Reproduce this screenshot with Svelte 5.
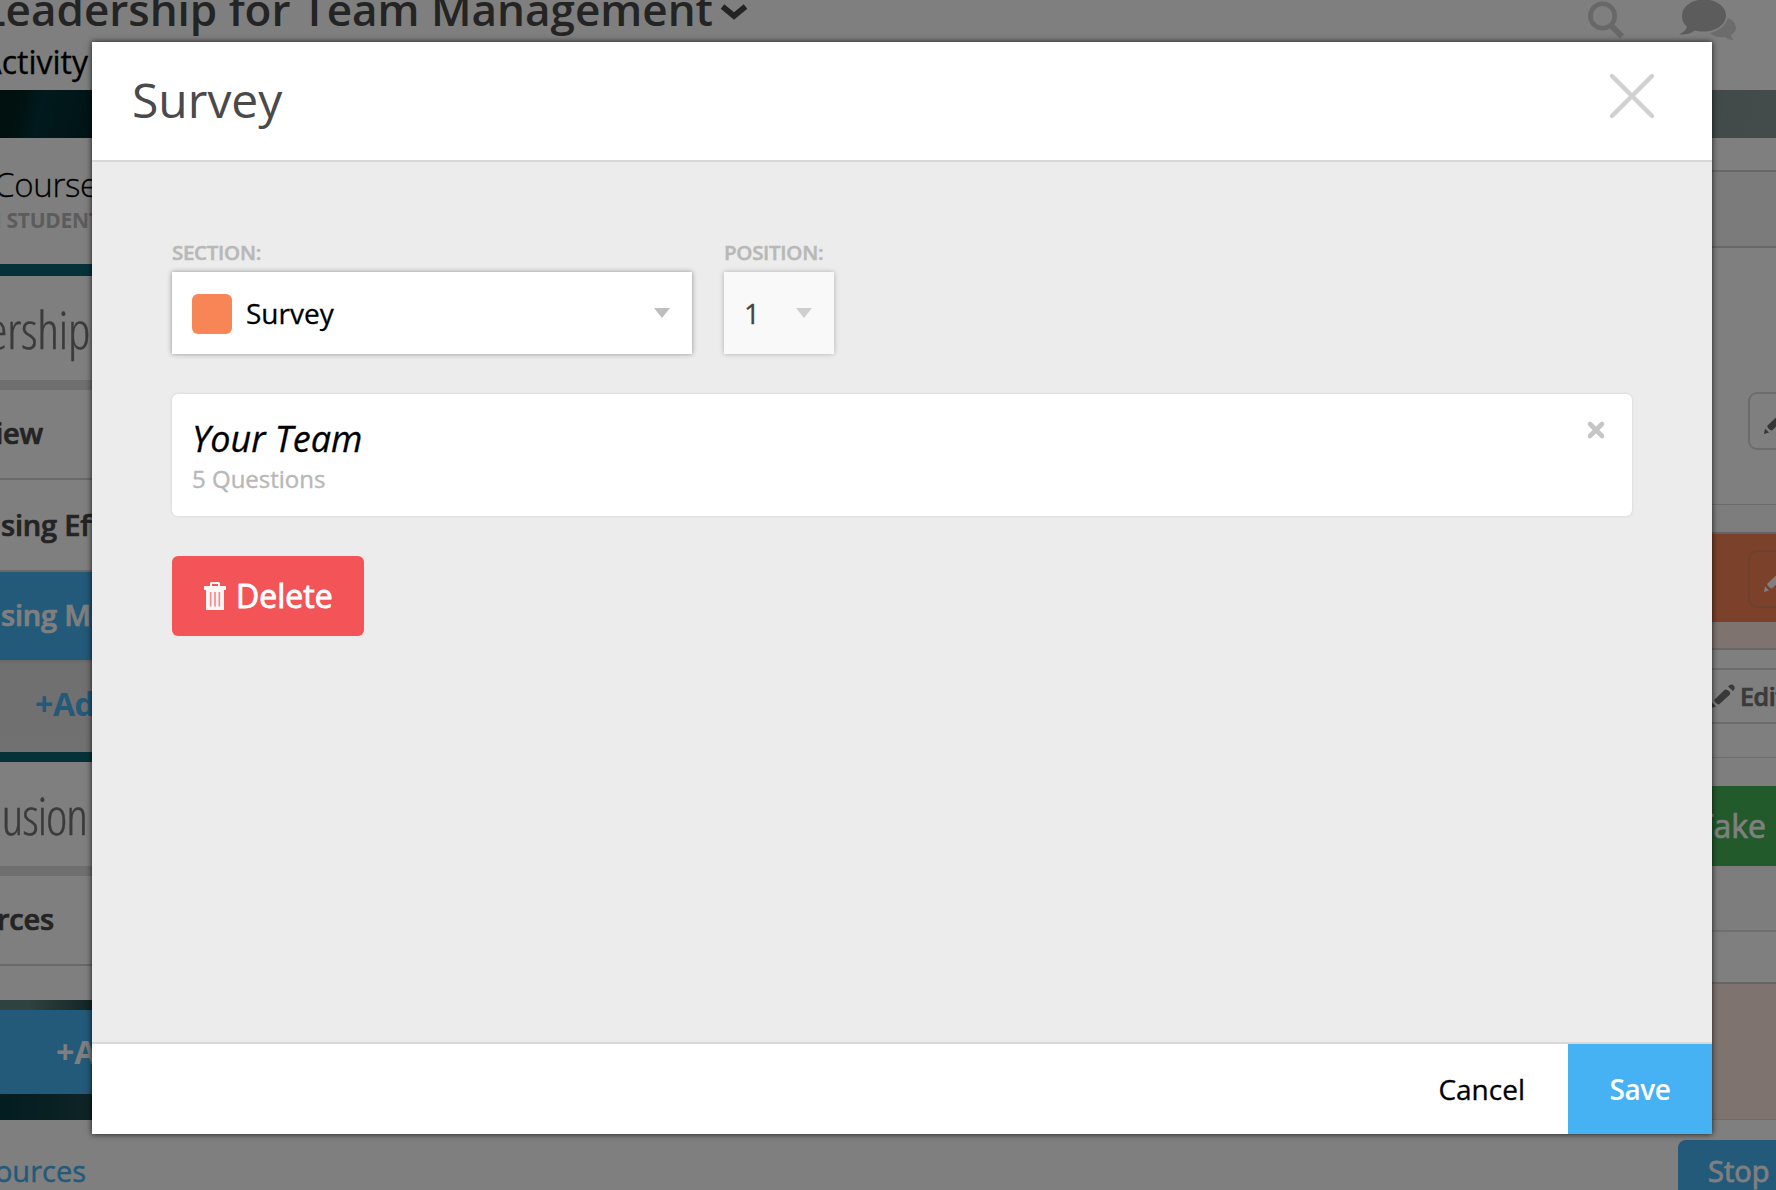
<script>
  const bin = 'M6 4V1.500Q6 0 7.500 0H14.500Q16 0 16 1.500V4H22V8H20V28H2V8H0V4ZM8 4H14V2H8Z';
  const pencil = 'M0 24 1 18.500 5 22.500ZM3 16 14 5.500Q16 5 18 7 20 9 19 10.500L8 20.500Q6 20 5 19 3.500 17.500 3 16ZM17 2.500Q19 0 21.500 0.500 24 2 23.800 4.500L22 7Z';
</script>

<div class="page">
  <header class="top">
    <div class="course-title">
      <span>Leadership for Team Management</span>
      <svg width="26" height="17" viewBox="0 0 26 17"><path d="M1.500 3.500 13 13 24.500 3.500" fill="none" stroke="#484848" stroke-width="5.6" /></svg>
    </div>
    <div class="tab">Activity</div>
    <div class="tools">
      <svg width="36" height="44" viewBox="0 0 36 44">
        <circle cx="14.600" cy="16" r="12.200" fill="none" stroke="#d0d0d0" stroke-width="4.600" />
        <path d="M23.500 26 34 36.500" stroke="#d0d0d0" stroke-width="6" />
      </svg>
      <svg width="58" height="44" viewBox="0 0 58 44">
        <path d="M50 18c5 2 8 6 8 10 0 3-2 5-5 7 0 2 1 4 3 5-4 0-7-1-9-3-7 1-12-1-15-4 9-2 16-8 18-15Z" fill="#d8d8d8" />
        <path d="M26-.5c12 0 22 7 22 16s-10 16-22 16c-3 0-6 0-9-1-4 3-9 4.500-16 4 4-2 7-4 8-8-4-3-5-7-5-11 0-9 10-16 22-16Z" fill="#b8b8b8" />
      </svg>
    </div>
  </header>
  <div class="hero"></div>

  <main>
    <aside>
      <div class="card-head">
        <div class="course">Course</div>
        <div class="students">IN STUDENT</div>
      </div>
      <div class="strip teal tall"></div>
      <div class="unit"><span>Leadership</span></div>
      <div class="band"></div>
      <div class="row view"><span>Overview</span></div>
      <div class="row using"><span>sing Effective</span></div>
      <div class="row active"><span>sing Methods</span></div>
      <div class="add">+Add</div>
      <div class="strip teal"></div>
      <div class="unit second"><span>usion</span></div>
      <div class="band"></div>
      <div class="row res"><span>Resources</span></div>
      <div class="blank"></div>
      <div class="strip photo"></div>
      <div class="add-unit">+Add</div>
      <div class="strip photo-low"></div>
    </aside>

    <section class="content">
      <div class="r1"></div>
      <div class="r2"></div>
      <div class="r3"><div class="edit-btn"><svg width="24" height="24" viewBox="0 0 24 24"><path d={pencil} fill="#6a6a6a" /></svg></div></div>
      <div class="r4"></div>
      <div class="r5"><div class="edit-btn dim"><svg width="24" height="24" viewBox="0 0 24 24"><path d={pencil} fill="#fff" /></svg></div></div>
      <div class="r6"></div>
      <div class="r7"></div>
      <div class="r8"><svg width="24" height="24" viewBox="0 0 24 24"><path d={pencil} fill="#727272" /></svg><span>Edit</span></div>
      <div class="r9"></div>
      <div class="r10"></div>
      <div class="r11">Take</div>
      <div class="r12"></div>
      <div class="r13"></div>
      <div class="r14"></div>
    </section>
  </main>

  <footer class="bottom">
    <div class="link">Resources</div>
    <div class="stop">Stop</div>
  </footer>

  <div class="overlay">
    <div class="modal" role="dialog" aria-label="Survey">
      <div class="m-head">
        <h1>Survey</h1>
        <svg width="48" height="48" viewBox="0 0 48 48"><path d="M4 4 44 44M44 4 4 44" stroke="#d0d0d0" stroke-width="4.400" stroke-linecap="round" /></svg>
      </div>
      <div class="m-body">
        <div class="fields">
          <div class="field">
            <div class="label">SECTION:</div>
            <div class="select wide">
              <i class="swatch"></i><span>Survey</span><i class="arrow"></i>
            </div>
          </div>
          <div class="field">
            <div class="label">POSITION:</div>
            <div class="select small"><span>1</span><i class="arrow"></i></div>
          </div>
        </div>
        <div class="survey">
          <div>
            <div class="name">Your Team</div>
            <div class="count">5 Questions</div>
          </div>
          <svg width="20" height="20" viewBox="0 0 20 20"><path d="M4 4 16 16M16 4 4 16" stroke="#c6c6c6" stroke-width="4.600" stroke-linecap="round" /></svg>
        </div>
        <div class="delete">
          <svg width="22" height="28" viewBox="0 0 22 28">
            <path fill-rule="evenodd" d={bin} fill="#fff" fill-opacity=".95" />
            <path d="M6.700 10V24.500M11 10V24.500M15.300 10V24.500" stroke="#f78a8c" stroke-width="1.700" />
          </svg>
          <span>Delete</span>
        </div>
      </div>
      <div class="m-foot">
        <div class="cancel">Cancel</div>
        <div class="save">Save</div>
      </div>
    </div>
  </div>
</div>

<style>
  :global(body) { overflow: hidden; }
  * { box-sizing: border-box; }
  .page {
    position: relative;
    width: 1776px;
    height: 1190px;
    overflow: hidden;
    background: #fff;
    font-family: "Open Sans", "Noto Sans", sans-serif;
    white-space: nowrap;
  }
  svg { display: block; flex: none; overflow: visible; }

  .top {
    display: grid;
    grid-template-columns: 740px 1fr auto;
    grid-template-rows: 44px 46px;
    height: 90px;
    background: #fcfefc;
  }
  .course-title {
    display: flex;
    justify-content: flex-end;
    gap: 8px;
    width: 747px;
    margin-top: -19px;
    line-height: 56px;
    font-size: 44px;
    font-weight: 600;
    color: #484848;
  }
  .course-title svg { margin-top: 22px; }
  .tab {
    grid-row: 2;
    grid-column: 1;
    width: 88px;
    display: flex;
    justify-content: flex-end;
    font-size: 32px;
    line-height: 36px;
    -webkit-text-stroke: .3px;
  }
  .tools { display: flex; gap: 54px; grid-column: 3; grid-row: 1; padding-right: 40px; }
  .hero {
    height: 48px;
    background: linear-gradient(105deg, #00221f 0, #00221f 20px, #02343a 44px, #022a2e 92px, #869896 1700px, #869896);
  }

  main { display: flex; justify-content: space-between; height: 982px; }
  aside { width: 300px; }
  .card-head { height: 126px; padding-top: 24px; }
  .course { margin-left: -6px; font-size: 33px; font-weight: 300; line-height: 45px; -webkit-text-stroke: .3px; letter-spacing: -.3px; }
  .students { margin-left: -22px; font-size: 21px; font-weight: 700; line-height: 27px; letter-spacing: -.3px; color: #b8b8b8; }
  .strip { height: 10px; }
  .strip.tall { height: 12px; }
  .teal { background: #0b6470; }
  .unit {
    display: flex;
    justify-content: flex-end;
    width: 90px;
    height: 104px;
    font-size: 51px;
    font-weight: 300;
    font-stretch: 75%;
    line-height: 107px;
    letter-spacing: -.3px;
    color: #767676;
    -webkit-text-stroke: .4px;
  }
  .unit.second { width: 87px; letter-spacing: -1.1px; }
  .band { height: 10px; background: #dfdfdf; }
  .row {
    display: flex;
    height: 90px;
    border-bottom: 2px solid #d2d2d2;
    font-size: 29px;
    font-weight: 600;
    line-height: 85px;
    letter-spacing: -.2px;
    color: #484848;
    -webkit-text-stroke: .7px;
  }
  .using { height: 92px; line-height: 89px; padding-left: 1px; }
  .active { height: 88px; border: 0; background: #46b2f3; color: #fff; line-height: 85px; padding-left: 1px; }
  .view, .res { margin-left: -200px; width: 500px; }
  .view span { width: 243px; text-align: right; }
  .res span { width: 254px; text-align: right; }
  .add {
    height: 92px;
    padding-left: 35px;
    background: linear-gradient(#d0d0d0, #e0e0e0 4px, #e2e2e2);
    color: #46b2f3;
    font-size: 32px;
    font-weight: 700;
    line-height: 87px;
    letter-spacing: -.4px;
  }
  .blank { height: 34px; }
  .photo { background: linear-gradient(90deg, #5c8480, #5c8480 30px, #26474b 92px); }
  .add-unit {
    height: 84px;
    padding-left: 56px;
    background: #46b2f3;
    color: #fff;
    font-size: 32px;
    font-weight: 700;
    line-height: 83px;
  }
  .photo-low { height: 26px; background: linear-gradient(90deg, #063a40, #1e484c 92px); }

  .content { width: 76px; }
  .r1 { height: 34px; border-bottom: 2px solid #d0d0d0; }
  .r2 { height: 76px; background: #f7f7f7; border-bottom: 2px solid #d0d0d0; }
  .r3 { height: 257px; padding-top: 144px; border-bottom: 1px solid #d6d6d6; }
  .r4 { height: 29px; background: #fbfbfb; border-bottom: 2px solid #c8c8c8; }
  .r5 { height: 88px; padding-top: 16px; background: #f88256; }
  .r6 { height: 28px; background: #ffe6e0; border-bottom: 2px solid #d0cccc; }
  .r7 { height: 20px; border-bottom: 2px solid #d6d6d6; }
  .r8 {
    display: flex;
    gap: 5px;
    height: 54px;
    padding: 14px 0 0 12px;
    border-bottom: 2px solid #d6d6d6;
    color: #767676;
    font-size: 25px;
    font-weight: 600;
    line-height: 25px;
    letter-spacing: -.4px;
    -webkit-text-stroke: .7px;
  }
  .r8 svg { margin-left: -1px; }
  .r9 { height: 34px; border-bottom: 1px solid #dcdcdc; }
  .r10 { height: 28px; background: #fdfdfd; }
  .r11 {
    display: flex;
    justify-content: flex-end;
    height: 80px;
    padding-right: 10px;
    background: #46b456;
    color: #fff;
    font-size: 32px;
    font-weight: 500;
    line-height: 80px;
    -webkit-text-stroke: .7px;
  }
  .r12 { height: 66px; background: #fbfbfb; border-bottom: 2px solid #e0e0e0; }
  .r13 { height: 52px; border-bottom: 2px solid #ccc; }
  .r14 { height: 136px; background: #ffe6e0; border-bottom: 1px solid #e8d4cc; }
  .edit-btn {
    margin-left: 48px;
    width: 60px;
    height: 58px;
    padding: 16px 0 0 14px;
    border: 2px solid #d8d8d8;
    border-radius: 9px;
  }
  .edit-btn.dim { border-color: rgba(150, 130, 120, .3); }

  .bottom { display: flex; justify-content: space-between; height: 70px; }
  .link {
    display: flex;
    justify-content: flex-end;
    width: 86px;
    padding-top: 31px;
    color: #46b2f3;
    font-size: 29px;
    line-height: 40px;
    -webkit-text-stroke: .4px;
  }
  .stop {
    width: 98px;
    margin-top: 20px;
    padding: 0 0 0 30px;
    background: #46b2f3;
    border-radius: 8px 0 0 0;
    color: #fff;
    font-size: 29px;
    font-weight: 400;
    line-height: 62px;
    -webkit-text-stroke: .8px;
  }

  .overlay { position: absolute; inset: 0; padding: 42px 64px 56px 92px; background: rgba(0, 0, 0, .5); }
  .modal {
    display: flex;
    flex-direction: column;
    height: 1092px;
    width: 1620px;
    background: #fff;
    box-shadow: 0 0 6px rgba(0, 0, 0, .8);
  }
  .m-head {
    display: flex;
    justify-content: space-between;
    align-items: flex-start;
    height: 120px;
    padding: 30px 56px 0 40px;
    border-bottom: 2px solid #d8d8d8;
  }
  h1 { margin: -2px 0 0; font-size: 48px; font-weight: 400; line-height: 60px; color: #4a4a4a; }
  .m-body { flex: 1; padding: 76px 80px 0; background: #ececec; }
  .fields { display: flex; gap: 32px; }
  .label {
    height: 34px;
    font-size: 20.500px;
    font-weight: 600;
    line-height: 29px;
    letter-spacing: -.3px;
    color: #b8b8b8;
    -webkit-text-stroke: .5px;
  }
  .select {
    display: flex;
    align-items: center;
    height: 82px;
    background: #fff;
    box-shadow: 0 0 5px rgba(0, 0, 0, .4);
    font-size: 28px;
    line-height: 40px;
  }
  .wide { width: 520px; padding: 2px 22px 0 20px; }
  .wide span { margin: -3px auto 0 14px; -webkit-text-stroke: .3px; }
  .small { width: 110px; padding: 2px 22px 0 20px; background: #f9f9f9; color: #444; box-shadow: 0 0 5px rgba(0, 0, 0, .26); }
  .small span { margin-right: auto; margin-top: -3px; -webkit-text-stroke: .3px; }
  .swatch { width: 40px; height: 40px; border-radius: 6px; background: #f88556; }
  .arrow { width: 16px; height: 10px; margin-top: -2px; background: #bebebe; clip-path: polygon(0 0, 100% 0, 50% 100%); }
  .small .arrow { background: #cfcfcf; }
  .survey {
    display: flex;
    justify-content: space-between;
    height: 122px;
    margin-top: 40px;
    padding: 20px 26px 0 20px;
    border-radius: 6px;
    background: #fff;
    box-shadow: 0 0 3px rgba(0, 0, 0, .12);
  }
  .survey svg { margin-top: 6px; }
  .name { font-size: 36px; font-style: italic; line-height: 50px; -webkit-text-stroke: .3px; }
  .count { font-size: 24px; line-height: 30px; color: #b8b8b8; -webkit-text-stroke: .4px; }
  .delete {
    display: flex;
    gap: 10px;
    width: 192px;
    height: 80px;
    margin-top: 40px;
    padding: 26px 0 0 32px;
    border-radius: 6px;
    background: #f25457;
    color: #fff;
    font-size: 32px;
    font-weight: 400;
    line-height: 28px;
    -webkit-text-stroke: .9px;
  }
  .m-foot { display: flex; justify-content: flex-end; height: 92px; border-top: 2px solid #d8d8d8; font-size: 28px; line-height: 90px; }
  .cancel { padding-right: 43px; -webkit-text-stroke: .3px; }
  .save { width: 144px; text-align: center; background: #46b2f3; color: #fff; font-weight: 600; letter-spacing: -.4px; }
</style>
